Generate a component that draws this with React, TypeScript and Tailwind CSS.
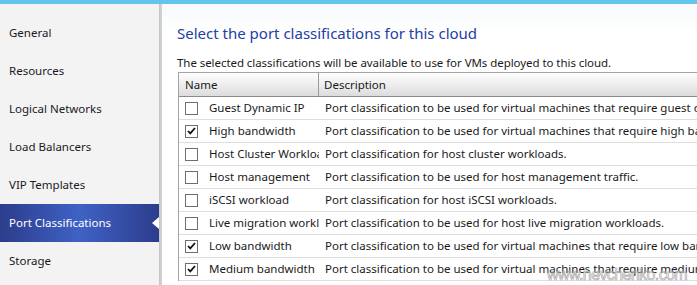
import React from 'react';

const navItems = [
  'General',
  'Resources',
  'Logical Networks',
  'Load Balancers',
  'VIP Templates',
  'Port Classifications',
  'Storage',
];

const rows = [
  { name: 'Guest Dynamic IP', checked: false, desc: 'Port classification to be used for virtual machines that require guest dynamic IP.' },
  { name: 'High bandwidth', checked: true, desc: 'Port classification to be used for virtual machines that require high bandwidth.' },
  { name: 'Host Cluster Workload', checked: false, desc: 'Port classification for host cluster workloads.' },
  { name: 'Host management', checked: false, desc: 'Port classification to be used for host management traffic.' },
  { name: 'iSCSI workload', checked: false, desc: 'Port classification for host iSCSI workloads.' },
  { name: 'Live migration  workload', checked: false, desc: 'Port classification to be used for host live migration workloads.' },
  { name: 'Low bandwidth', checked: true, desc: 'Port classification to be used for virtual machines that require low bandwidth.' },
  { name: 'Medium bandwidth', checked: true, desc: 'Port classification to be used for virtual machines that require medium bandwidth.' },
];

function CheckBox({ checked }: { checked: boolean }) {
  return (
    <div className="w-[13px] h-[13px] shrink-0 border border-[#6e6e6e] bg-white flex items-center justify-center">
      {checked && (
        <svg width="9" height="8" viewBox="0 0 9 8">
          <path d="M1 4 L3.3 6.4 L8 1" fill="none" stroke="#111" strokeWidth="1.8" />
        </svg>
      )}
    </div>
  );
}

export default function App() {
  const active = 'Port Classifications';

  return (
    <div
      className="relative w-[697px] h-[285px] overflow-hidden flex flex-col bg-white text-[11.5px] text-[#1a1a1a]"
      style={{ fontFamily: '"Noto Sans", "Liberation Sans", sans-serif' }}
    >
      <div className="h-[4px] bg-[#63c5ea] shrink-0" />
      <div className="flex flex-1 min-h-0">
        {/* sidebar */}
        <div className="w-[159px] shrink-0 bg-[#f3f3f3] flex flex-col pt-[10px]">
          {navItems.map((item) => {
            const isActive = item === active;
            return (
              <div
                key={item}
                className={
                  isActive
                    ? 'relative h-[38px] flex items-center pl-[9px] text-white bg-gradient-to-r from-[#2c3d8c] via-[#3f62c6] to-[#2c3d8c]'
                    : 'h-[38px] flex items-center pl-[9px]'
                }
              >
                {item}
                {isActive && (
                  <div className="absolute right-0 top-[13px] w-0 h-0 border-y-[6px] border-y-transparent border-r-[7px] border-r-white" />
                )}
              </div>
            );
          })}
        </div>
        <div className="w-[3px] shrink-0 bg-gradient-to-r from-[#c4c4c4] to-[#d6d6d6]" />

        {/* content */}
        <div className="flex-1 min-w-0 pl-[16px] bg-gradient-to-b from-[#f7f9fb] to-white to-[30px]">
          <div className="pt-[18px] -ml-px text-[15px] leading-[22px] text-[#2340a4] whitespace-nowrap">
            Select the port classifications for this cloud
          </div>
          <div className="mt-[11px] -ml-px leading-[16px] whitespace-nowrap tracking-[-0.06px]">
            The selected classifications will be available to use for VMs deployed to this cloud.
          </div>
          <div className="mt-[1px] border-l border-t border-[#a3a3a3] w-[600px]">
            <div className="flex h-[24px] bg-gradient-to-b from-white to-[#dcdcdc] border-b border-[#8a8a8a]">
              <div className="w-[140px] shrink-0 pl-[6px] flex items-center border-r border-[#9a9a9a]">Name</div>
              <div className="flex-1 pl-[5px] flex items-center">Description</div>
            </div>
            {rows.map((r) => (
              <div key={r.name} className="flex h-[23px] border-b border-[#dedede] whitespace-nowrap">
                <div className="w-[140px] shrink-0 flex items-center pl-[6px] overflow-hidden">
                  <CheckBox checked={r.checked} />
                  <span className="ml-[11px]">{r.name}</span>
                </div>
                <div className="flex-1 flex items-center pl-[6px] overflow-hidden">{r.desc}</div>
              </div>
            ))}
          </div>
        </div>
      </div>
      <div
        className="absolute left-[547px] top-[266px] text-[16px] leading-[18px] tracking-[-0.6px] text-transparent pointer-events-none [-webkit-text-stroke:0.7px_#a8a8a8]"
        style={{ fontFamily: '"Liberation Sans", sans-serif' }}
      >
        www.nevchenko.com
      </div>
    </div>
  );
}
